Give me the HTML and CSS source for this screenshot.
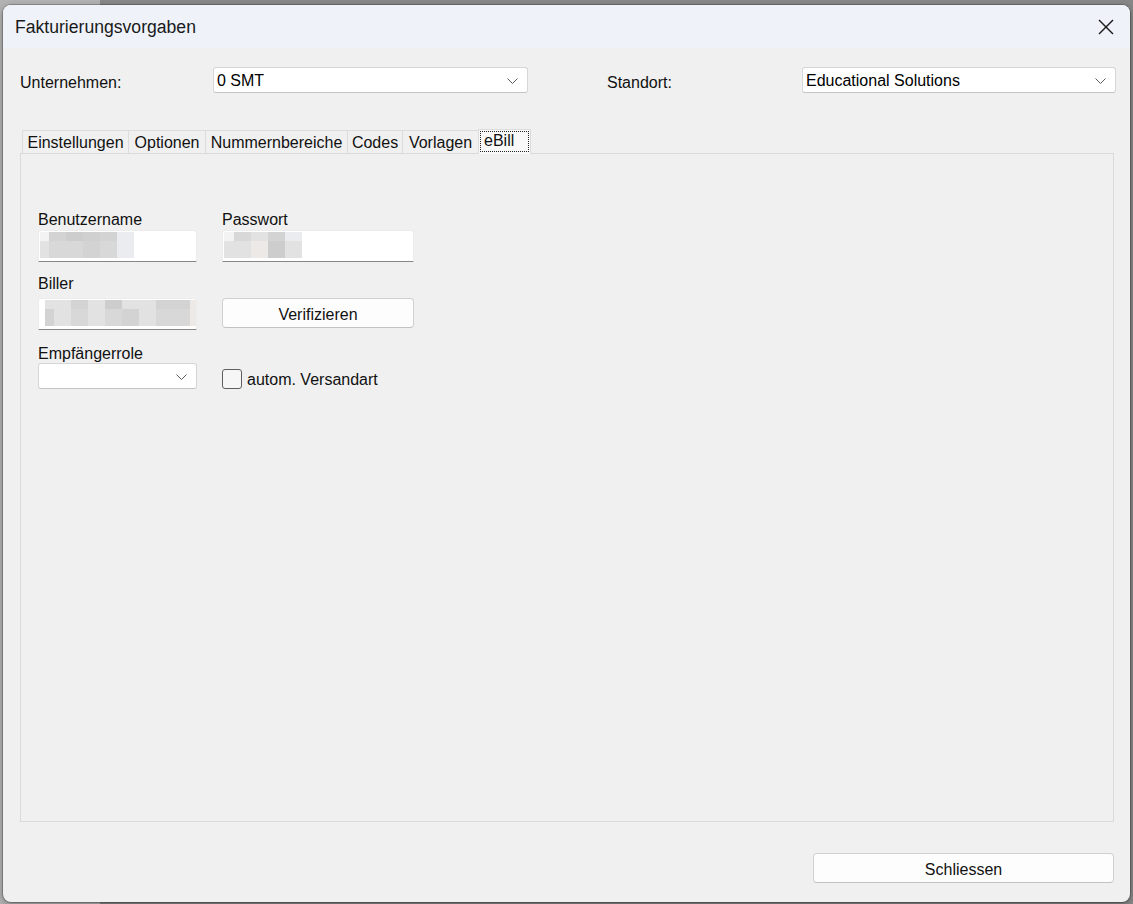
FILE: index.html
```html
<!DOCTYPE html>
<html lang="de">

<head>
    <meta charset="UTF-8">
    <meta name="viewport" content="width=device-width, initial-scale=1.0">
    <title>Fakturierungsvorgaben</title>
    <link rel="stylesheet" href="styles.css">
</head>

<body>

    <div class="window">

        <!-- Titelleiste -->
        <div class="titlebar">
            <span class="title">Fakturierungsvorgaben</span>
            <svg class="close-icon" width="16" height="16" viewBox="0 0 16 16">
                <line x1="1" y1="1" x2="15" y2="15" stroke="#1b1b1b" stroke-width="1.4" />
                <line x1="15" y1="1" x2="1" y2="15" stroke="#1b1b1b" stroke-width="1.4" />
            </svg>
        </div>

        <div class="content">

            <!-- Unternehmen / Standort -->
            <div class="top-row">
                <span class="top-label">Unternehmen:</span>
                <div class="combo combo-company">
                    <span>0 SMT</span>
                    <svg class="chevron" width="11" height="6" viewBox="0 0 11 6">
                        <polyline points="0.5,0.5 5.5,5.5 10.5,0.5" fill="none" stroke="#5a5a5a" stroke-width="1" />
                    </svg>
                </div>
                <span class="top-label top-label-site">Standort:</span>
                <div class="combo combo-site">
                    <span>Educational Solutions</span>
                    <svg class="chevron" width="11" height="6" viewBox="0 0 11 6">
                        <polyline points="0.5,0.5 5.5,5.5 10.5,0.5" fill="none" stroke="#5a5a5a" stroke-width="1" />
                    </svg>
                </div>
            </div>

            <!-- Reiter -->
            <div class="tabs">
                <div class="tab tab-settings">Einstellungen</div>
                <div class="tab tab-options">Optionen</div>
                <div class="tab tab-ranges">Nummernbereiche</div>
                <div class="tab tab-codes">Codes</div>
                <div class="tab tab-templates">Vorlagen</div>
                <div class="tab tab-active"><span class="focus">eBill</span></div>
            </div>

            <div class="panel">

                <div class="field-labels">
                    <span class="col-left">Benutzername</span>
                    <span class="col-right">Passwort</span>
                </div>
                <div class="field-row">
                    <div class="textbox col-left">
                        <div class="blur blur-user">
                            <span class="g1"></span><span class="g3"></span><span class="g4"></span><span class="g5"></span><span class="g3"></span><span class="g7"></span>
                            <span class="g6"></span><span class="g2"></span><span class="g2"></span><span class="g3"></span><span class="g2"></span><span class="g7"></span>
                        </div>
                    </div>
                    <div class="textbox col-right">
                        <div class="blur blur-pass">
                            <span class="g1"></span><span class="g2"></span><span class="g6"></span><span class="g3"></span><span class="g7"></span>
                            <span class="g6"></span><span class="g6"></span><span class="g8"></span><span class="g4"></span><span class="g6"></span>
                        </div>
                    </div>
                </div>

                <div class="field-labels label-biller">
                    <span class="col-left">Biller</span>
                </div>
                <div class="field-row">
                    <div class="textbox col-left">
                        <div class="blur blur-biller">
                            <span class="g6"></span><span class="g6"></span><span class="g3"></span><span class="g6"></span><span class="g4"></span><span class="g6"></span><span class="g6"></span><span class="g3"></span><span class="g3"></span><span class="g8"></span>
                            <span class="g3"></span><span class="g6"></span><span class="g2"></span><span class="g6"></span><span class="g2"></span><span class="g3"></span><span class="g6"></span><span class="g2"></span><span class="g2"></span><span class="g8"></span>
                        </div>
                    </div>
                    <button type="button" class="btn btn-verify col-right">Verifizieren</button>
                </div>

                <div class="field-labels label-role">
                    <span class="col-left">Empfängerrole</span>
                </div>
                <div class="field-row row-role">
                    <div class="combo col-left">
                        <span></span>
                        <svg class="chevron" width="11" height="6" viewBox="0 0 11 6">
                            <polyline points="0.5,0.5 5.5,5.5 10.5,0.5" fill="none" stroke="#5a5a5a" stroke-width="1" />
                        </svg>
                    </div>
                    <label class="check">
                        <span class="check-box"></span>
                        <span class="check-text">autom. Versandart</span>
                    </label>
                </div>

            </div>
        </div>

        <div class="footer">
            <button type="button" class="btn btn-close">Schliessen</button>
        </div>

    </div>

</body>

</html>
```

FILE: styles.css
```css
body {
    margin: 0;
    height: 904px;
    overflow: hidden;
    font-family: "Liberation Sans", Arial, sans-serif;
    font-size: 16px;
    color: #000;
    background: linear-gradient(to right, #b2b2b2 100px, #878787 100px);
}

.window {
    margin: 5px 3px 0 3px;
    width: 1127px;
    height: 897px;
    border-radius: 8px;
    background-color: #f0f0f0;
    box-shadow: 0 0 0 1px rgba(0, 0, 0, 0.2), 0 2px 6px rgba(0, 0, 0, 0.35);
    overflow: hidden;
    display: flex;
    flex-direction: column;
}

.titlebar {
    height: 43px;
    flex-shrink: 0;
    background-color: #eff3f9;
    display: flex;
    align-items: center;
    justify-content: space-between;
    padding: 0 16px 0 12px;
}

.title {
    font-size: 17.6px;
    color: #1a1a1a;
    margin-top: 1px;
}

.content {
    flex: 1;
    display: flex;
    flex-direction: column;
    padding: 19px 17px 0 17px;
}

/* Unternehmen / Standort */
.top-row {
    display: flex;
    align-items: flex-start;
    height: 26px;
}

.top-label {
    width: 193px;
    flex-shrink: 0;
    line-height: 18px;
    margin-top: 7px;
    color: #111;
}

.top-label-site {
    width: 195px;
    margin-left: 79px;
}

.combo {
    box-sizing: border-box;
    height: 26px;
    flex-shrink: 0;
    display: flex;
    align-items: center;
    justify-content: space-between;
    padding: 1px 9px 0 3px;
    line-height: 18px;
    background-color: #fff;
    border: 1px solid #d6d6d6;
    border-bottom-color: #c4c4c4;
    border-radius: 3px;
}

.combo-company {
    width: 315px;
}

.combo-site {
    width: 314px;
}

/* Reiter */
.tabs {
    display: flex;
    align-items: flex-end;
    margin-top: 37px;
    padding-left: 2px;
    height: 23px;
}

.tab {
    box-sizing: border-box;
    height: 23px;
    line-height: 18px;
    padding-top: 3px;
    text-align: center;
    border: 1px solid #dcdcdc;
    border-bottom: none;
    border-right: none;
    color: #111;
}

.tab-settings {
    width: 106px;
}

.tab-options {
    width: 77px;
}

.tab-ranges {
    width: 142px;
}

.tab-codes {
    width: 55px;
}

.tab-templates {
    width: 76px;
}

.tab-active {
    width: 53px;
    height: 25px;
    margin-bottom: -1px;
    position: relative;
    z-index: 1;
    background-color: #f9f9f9;
    border-right: 1px solid #dcdcdc;
    padding: 1px 1px 0 1px;
    text-align: left;
}

.focus {
    display: block;
    height: 19px;
    padding-left: 3px;
    line-height: 18px;
    border: 1px dotted #222;
}

.panel {
    flex: 1;
    width: 1094px;
    box-sizing: border-box;
    border: 1px solid #dadada;
    padding: 56px 0 0 17px;
}

.field-labels {
    display: flex;
    gap: 25px;
    height: 18px;
    line-height: 20px;
    margin-bottom: 2px;
    color: #111;
}

.label-biller {
    margin-top: 12px;
    margin-bottom: 6px;
}

.label-role {
    margin-top: 14px;
    margin-bottom: 1px;
}

.col-left {
    width: 159px;
    flex-shrink: 0;
}

.col-right {
    width: 192px;
    flex-shrink: 0;
}

.field-row {
    display: flex;
    align-items: flex-start;
    gap: 25px;
}

.row-role {
    align-items: flex-end;
}

.textbox {
    box-sizing: border-box;
    height: 32px;
    background-color: #fff;
    border: 1px solid #ececec;
    border-bottom: 1px solid #878787;
    border-radius: 3px 3px 0 0;
    padding: 1px 0 0 1px;
    overflow: hidden;
}

/* verpixelte Inhalte */
.blur {
    display: grid;
    grid-template-rows: 9px 17px;
}

.blur-user {
    grid-template-columns: 9px repeat(5, 17px);
}

.blur-pass {
    grid-template-columns: 10px repeat(4, 17px);
}

.blur-biller {
    margin-left: 5px;
    grid-template-columns: 9px repeat(8, 17px) 8px;
}

.g1 { background-color: #f3f3f3; }
.g2 { background-color: #d8d8d8; }
.g3 { background-color: #d3d3d3; }
.g4 { background-color: #cdcdcd; }
.g5 { background-color: #d0d0d0; }
.g6 { background-color: #e2e2e2; }
.g7 { background-color: #ebecef; }
.g8 { background-color: #ece9e6; }

.btn {
    box-sizing: border-box;
    height: 30px;
    font-family: "Liberation Sans", Arial, sans-serif;
    font-size: 16px;
    color: #111;
    background-color: #fdfdfd;
    border: 1px solid #d0d0d0;
    border-bottom-color: #c2c2c2;
    border-radius: 4px;
    padding: 3px 0 0 0;
}

.check {
    display: flex;
    align-items: center;
    gap: 5px;
    height: 20px;
    line-height: 18px;
    color: #111;
}

.check-text {
    padding-top: 2px;
}

.check-box {
    box-sizing: border-box;
    width: 20px;
    height: 20px;
    border: 1px solid #5e5e5e;
    border-radius: 3px;
    background-color: #f6f6f6;
}

.footer {
    display: flex;
    justify-content: flex-end;
    padding: 31px 16px 19px 0;
}

.btn-close {
    width: 301px;
}
```
